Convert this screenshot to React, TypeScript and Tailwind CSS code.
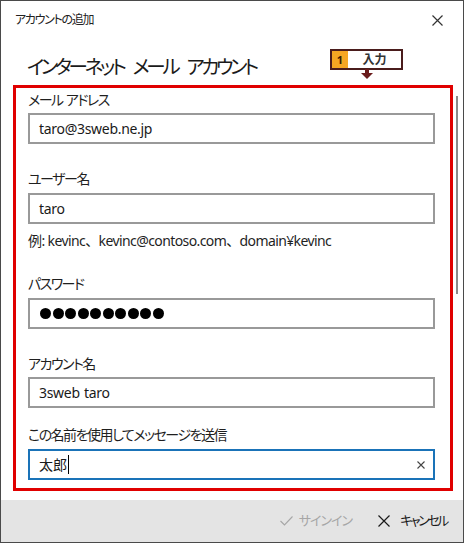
import React from 'react';

const font = "font-['Segoe_UI','Noto_Sans','Noto_Sans_CJK_JP',sans-serif] [font-feature-settings:'palt']";

const Label: React.FC<{ text: string; className?: string }> = ({ text, className }) => (
  <div className={`h-[20px] text-[14px] leading-[20px] tracking-[-1.5px] [word-spacing:1px] text-[#1f1f1f] ${className ?? ''}`}>{text}</div>
);

const Field: React.FC<{ value: React.ReactNode; className?: string; focused?: boolean }> = ({ value, className, focused }) => (
  <div
    className={`h-[31px] flex items-center pl-[9px] pr-[7px] border-2 ${
      focused ? 'border-[#1a73b8]' : 'border-[#999999]'
    } ${className ?? 'mt-[4px]'}`}
  >
    {value}
  </div>
);

const Value: React.FC<{ text: string }> = ({ text }) => (
  <span className="text-[14px] tracking-[-0.3px] [word-spacing:1px] text-[#1a1a1a]">{text}</span>
);

const App: React.FC = () => {
  return (
    <div className={`w-[464px] h-[543px] border border-[#4a4a4a] bg-white flex flex-col overflow-hidden ${font}`}>
      {/* titre */}
      <div className="h-[38px] shrink-0 flex items-center justify-between pl-[14px] pr-[20px]">
        <span className="text-[12px] tracking-[-1.3px] text-[#222]">アカウントの追加</span>
        <svg width="11" height="11" viewBox="0 0 11 11" className="text-[#333]">
          <path d="M0.5 0.5 L10.5 10.5 M10.5 0.5 L0.5 10.5" stroke="currentColor" strokeWidth="1.2" />
        </svg>
      </div>

      {/* en-tete */}
      <div className="relative h-[46px] shrink-0 pl-[26px] pt-[14px]">
        <h1 className="flex gap-[9px] text-[19.5px] leading-[28px] tracking-[-3.3px] text-[#1a1a1a] font-normal">
          <span>インターネット</span>
          <span>メール</span>
          <span>アカウント</span>
        </h1>

        {/* annotation */}
        <div className="absolute left-[329px] top-[10px] flex flex-col items-center">
          <div className="w-[73px] h-[21px] flex border-2 border-[#4a1c1c] bg-white">
            <span className="w-[16px] bg-[#f5a623] text-[11px] leading-[17px] text-center text-[#3a1a00] font-bold">1</span>
            <span className="flex-1 text-[12px] leading-[17px] text-center font-bold text-[#333]">入力</span>
          </div>
          <svg width="14" height="11" viewBox="0 0 14 11" className="mt-[-1px]">
            <rect x="5" y="0" width="4" height="4" fill="#6b1c1c" />
            <path d="M1 4 L13 4 L7 10 Z" fill="#6b1c1c" />
          </svg>
        </div>
      </div>

      {/* contenu */}
      <div className="relative flex-1 flex flex-col">
        <div className="mx-[12px] w-[440px] h-[406px] border-[3px] border-[#e00000] pl-[12px] pr-[15px] pt-[2px]">
          <Label text="メール アドレス" />
          <Field value={<Value text="taro@3sweb.ne.jp" />} className="mt-[3px]" />

          <Label text="ユーザー名" className="mt-[25px]" />
          <Field value={<Value text="taro" />} />
          <div className="mt-[7px] h-[20px] text-[14px] leading-[20px] tracking-[-0.6px] text-[#1f1f1f] [font-feature-settings:normal]">
            例: kevinc、kevinc@contoso.com、domain¥kevinc
          </div>

          <Label text="パスワード" className="mt-[23px]" />
          <Field
            value={
              <span className="flex gap-[1.5px] pl-[1px]">
                {Array.from({ length: 10 }).map((_, i) => (
                  <span key={i} className="w-[11px] h-[11px] rounded-full bg-black" />
                ))}
              </span>
            }
          />

          <Label text="アカウント名" className="mt-[25px]" />
          <Field value={<Value text="3sweb taro" />} className="mt-[3px]" />

          <Label text="この名前を使用してメッセージを送信" className="mt-[17px]" />
          <Field
            focused
            value={
              <div className="flex-1 flex items-center justify-between">
                <span className="flex items-center text-[14px] text-[#1a1a1a]">
                  太郎<span className="ml-[1px] w-[1px] h-[19px] bg-black" />
                </span>
                <svg width="8" height="8" viewBox="0 0 8 8" className="mr-[1px] text-[#444]">
                  <path d="M0.5 0.5 L7.5 7.5 M7.5 0.5 L0.5 7.5" stroke="currentColor" strokeWidth="1.1" />
                </svg>
              </div>
            }
          />
        </div>

        {/* barre de defilement */}
        <div className="absolute left-[455px] top-[11px] w-[2px] h-[198px] bg-[#8a8a8a]" />
      </div>

      {/* pied */}
      <div className="h-[42px] shrink-0 bg-[#e4e4e4] flex items-center justify-end pr-[16px] gap-[26px] mt-[9px]">
        <span className="flex items-center gap-[6px] text-[13px] tracking-[-1px] text-[#a6a6a6]">
          <svg width="13" height="10" viewBox="0 0 13 10">
            <path d="M0.5 5 L4.5 9 L12.5 0.5" fill="none" stroke="#a6a6a6" strokeWidth="1.1" />
          </svg>
          サインイン
        </span>
        <span className="flex items-center gap-[10px] text-[13px] tracking-[-2.4px] text-[#1a1a1a]">
          <svg width="12" height="12" viewBox="0 0 12 12">
            <path d="M0.5 0.5 L11.5 11.5 M11.5 0.5 L0.5 11.5" stroke="#1a1a1a" strokeWidth="1.2" />
          </svg>
          キャンセル
        </span>
      </div>
    </div>
  );
};

export default App;
